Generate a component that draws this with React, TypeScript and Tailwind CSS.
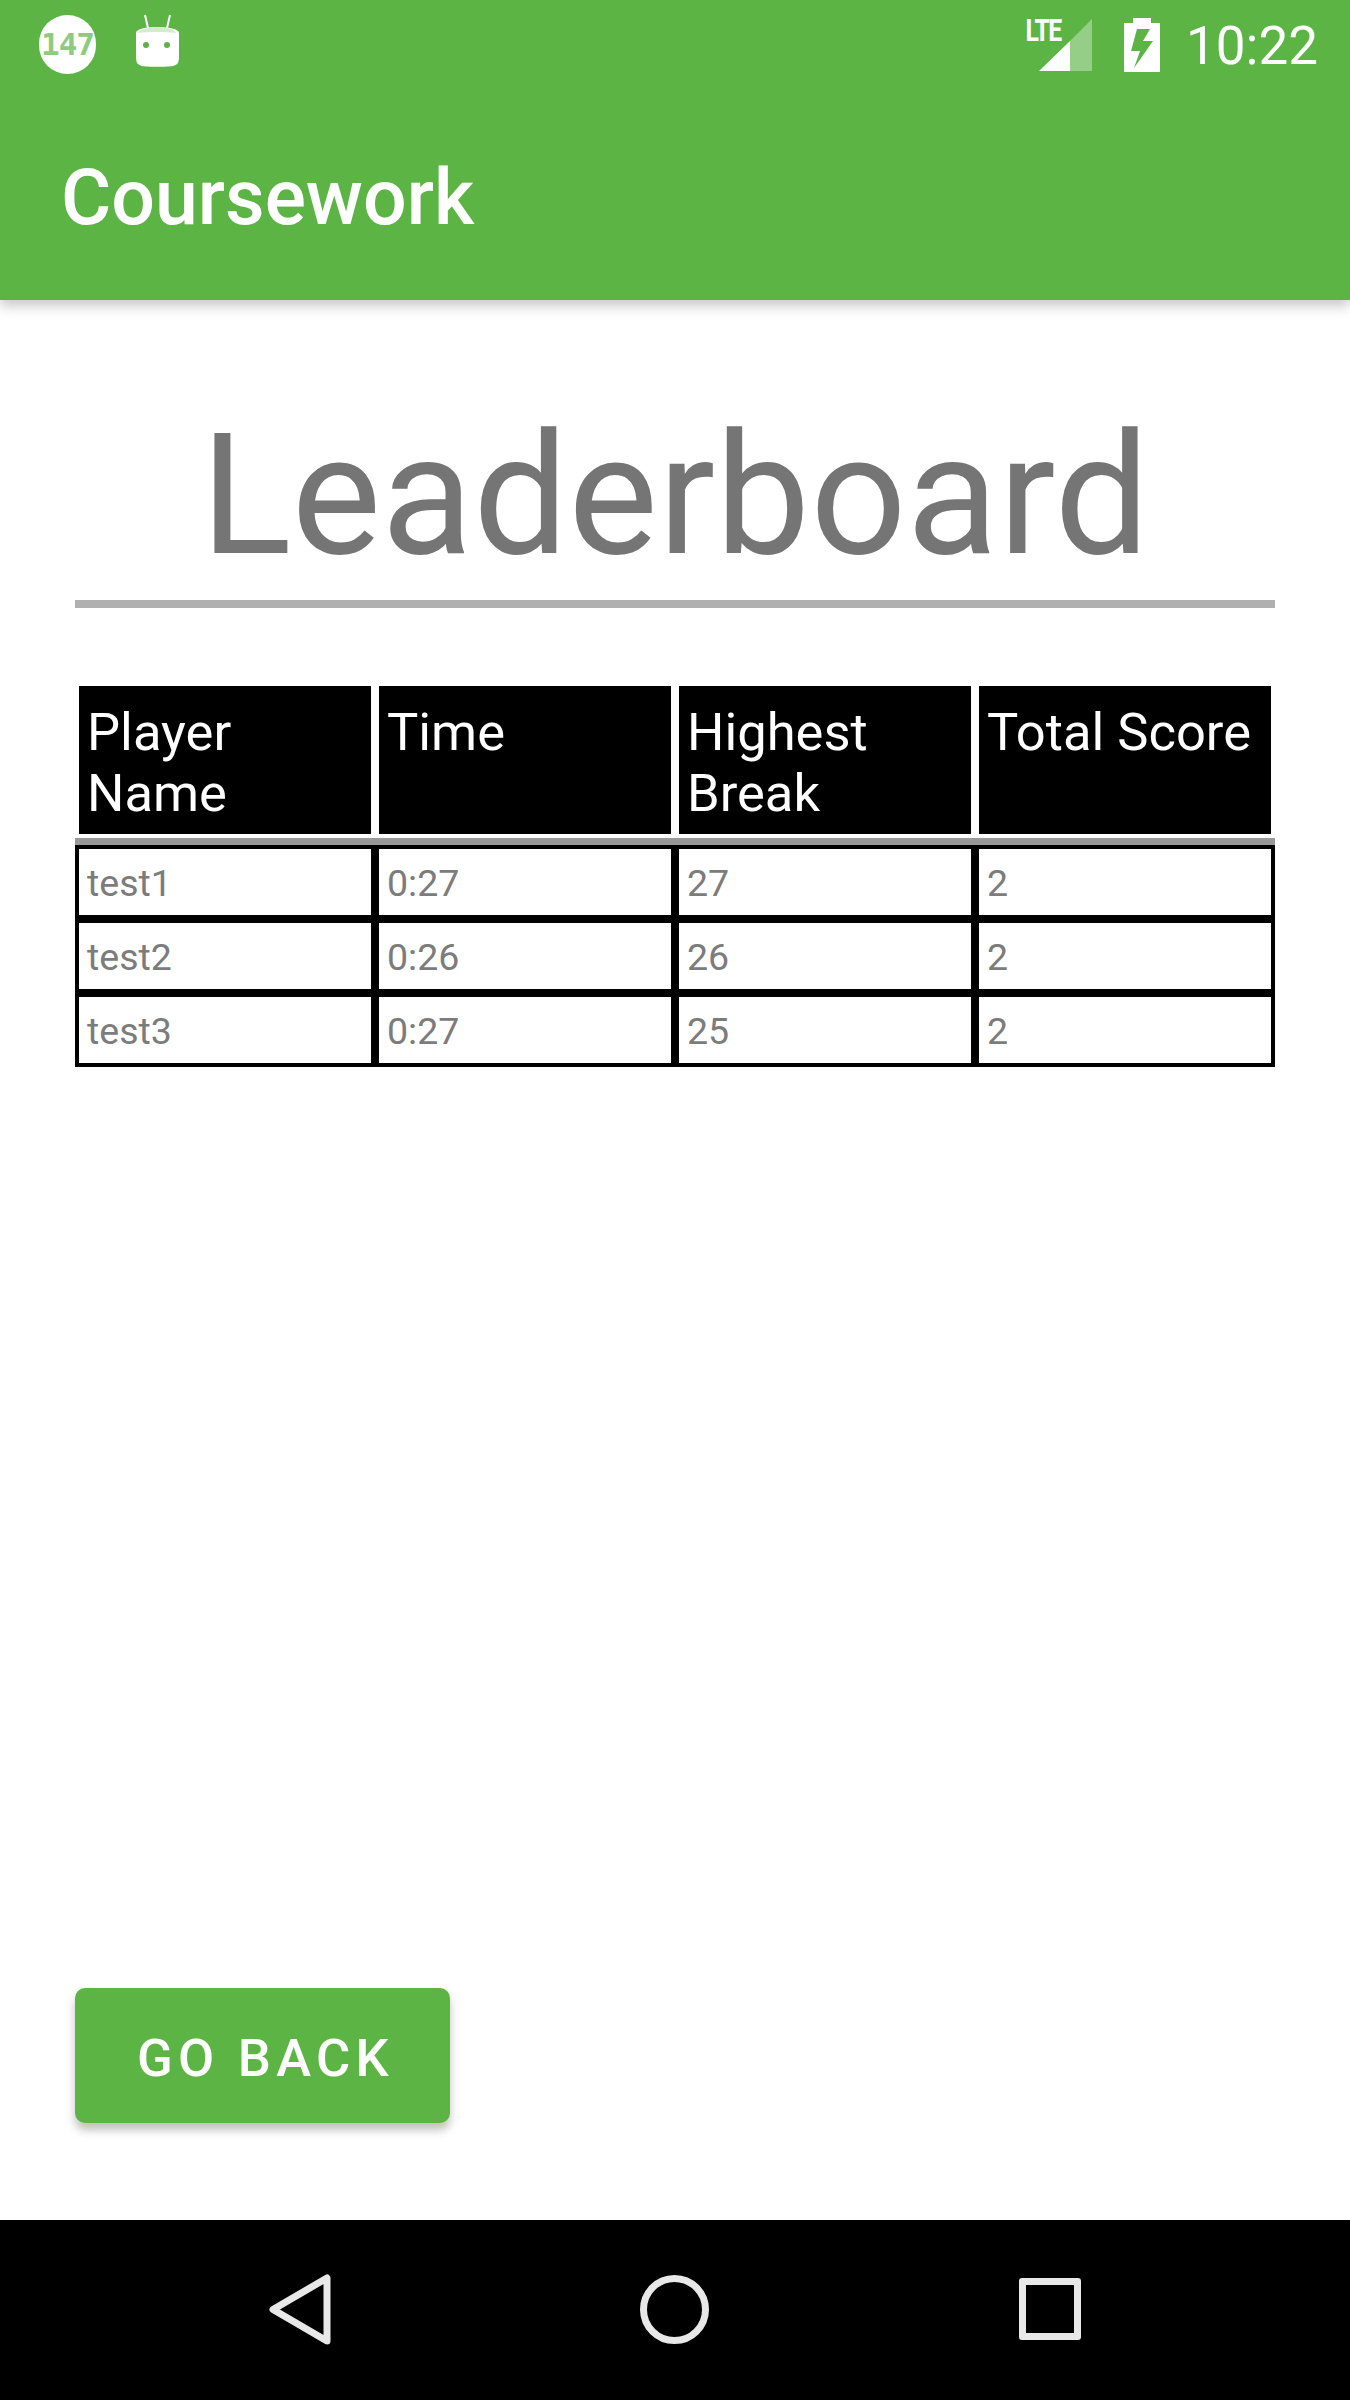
const headers = ['Player Name', 'Time', 'Highest Break', 'Total Score'];

const rows = [
  ['test1', '0:27', '27', '2'],
  ['test2', '0:26', '26', '2'],
  ['test3', '0:27', '25', '2'],
];

function AndroidHead() {
  return (
    <svg width="46" height="54" viewBox="0 0 46 54" className="ml-[39px] mt-[14px]">
      <path d="M10 1l3 13M35 1l-3 13" stroke="#fff" strokeWidth="2" fill="none" />
      <path d="M1 19c0-4 10-6 21-6s22 2 22 6v24c0 6-2 8-6 9-5 1-27 1-31 0-4-1-6-3-6-9z" fill="#fff" />
      <path d="M3 19c1-3 9-6 19-6s18 3 19 6c-6-1-12-1-19-1s-13 0-19 1z" fill="#d5ebcf" />
      <circle cx="11" cy="31" r="3" fill="#5cb445" />
      <circle cx="32" cy="31" r="3" fill="#5cb445" />
    </svg>
  );
}

function SignalIcon() {
  return (
    <svg width="54" height="54" viewBox="0 0 54 54" className="mt-[18px]">
      <path d="M0 53L31 23V53z" fill="#fff" />
      <path d="M31 23L53 1V53H31z" fill="#fff" fillOpacity="0.35" />
    </svg>
  );
}

function BatteryIcon() {
  return (
    <svg width="36" height="54" viewBox="0 0 36 54" className="ml-[33px] mt-[18px]">
      <path
        fillRule="evenodd"
        d="M9 0h18v5h9v49H0V5h9zM13 11l-6 22h9l-6 17 19-27h-10l7-12z"
        fill="#fff"
      />
    </svg>
  );
}

function StatusBar() {
  return (
    <div className="flex h-[75px] items-start justify-between">
      <div className="flex">
        <div className="ml-[39px] mt-[15px] flex h-[59px] w-[57px] items-center justify-center rounded-full bg-white font-['DejaVu_Sans_Mono',monospace] text-[31px] font-bold tracking-[-1px] text-[#8fcb7f]">
          147
        </div>
        <AndroidHead />
      </div>
      <div className="flex pr-[32px]">
        <div className="relative w-[70px]">
          <span className="absolute left-0 top-[15px] font-['Roboto',sans-serif] text-[31px] font-bold leading-[31px] tracking-[-2px] text-white [transform:scaleX(0.8)]">
            LTE
          </span>
          <div className="absolute left-[18px] top-0">
            <SignalIcon />
          </div>
        </div>
        <BatteryIcon />
        <span className="ml-[26px] mt-[16px] text-[53px] leading-[60px] text-white">10:22</span>
      </div>
    </div>
  );
}

function NavBar() {
  return (
    <div className="flex h-[180px] items-center bg-black pb-[2px]">
      <svg width="62" height="71" viewBox="0 0 62 71" className="ml-[269px]">
        <path d="M58 4V67L4 35.500z" fill="none" stroke="#e8e8e8" strokeWidth="7" strokeLinejoin="round" />
      </svg>
      <div className="ml-[309px] h-[69px] w-[69px] rounded-full border-[7px] border-[#e8e8e8]" />
      <div className="ml-[310px] h-[62px] w-[62px] rounded-[3px] border-[7px] border-[#e8e8e8]" />
    </div>
  );
}

export default function App() {
  return (
    <div className="flex h-[2400px] w-[1350px] flex-col bg-white font-['Roboto',sans-serif]">
      <header className="relative z-10 h-[300px] bg-[#5cb445] shadow-[0_6px_12px_rgba(0,0,0,0.22)]">
        <StatusBar />
        <h1 className="pl-[61px] pt-[79px] text-[77px] font-medium leading-[88px] text-white">Coursework</h1>
      </header>

      <main className="flex flex-1 flex-col px-[75px]">
        <h2 className="mt-[97px] text-center text-[169px] leading-[197px] text-[#757575]">Leaderboard</h2>
        <div className="mt-[6px] h-[8px] bg-[#b0b0b0]" />

        <div className="mt-[78px] grid grid-cols-4 gap-x-[8px] px-[4px]">
          {headers.map(h => (
            <div key={h} className="h-[148px] bg-black pl-[8px] pt-[16px] text-[52.5px] leading-[61px] text-white">
              {h}
            </div>
          ))}
        </div>

        <div className="mt-[4px] h-[7px] bg-[#999999]" />
        <div className="grid grid-cols-4 gap-x-[8px] gap-y-[8px] bg-black p-[4px]">
          {rows.map(row =>
            row.map((cell, i) => (
              <div key={row[0] + i} className="flex h-[66px] items-center bg-white pl-[8px] pt-[2px] text-[37.500px] text-[#7c7c7c]">
                {cell}
              </div>
            )),
          )}
        </div>

        <button className="mt-auto mb-[97px] h-[135px] w-[375px] rounded-[10px] bg-[#5cb445] pl-[6px] pt-[5px] text-[52.5px] font-medium tracking-[5.300px] text-white shadow-[0_7px_10px_rgba(0,0,0,0.25)]">
          GO BACK
        </button>
      </main>

      <NavBar />
    </div>
  );
}
